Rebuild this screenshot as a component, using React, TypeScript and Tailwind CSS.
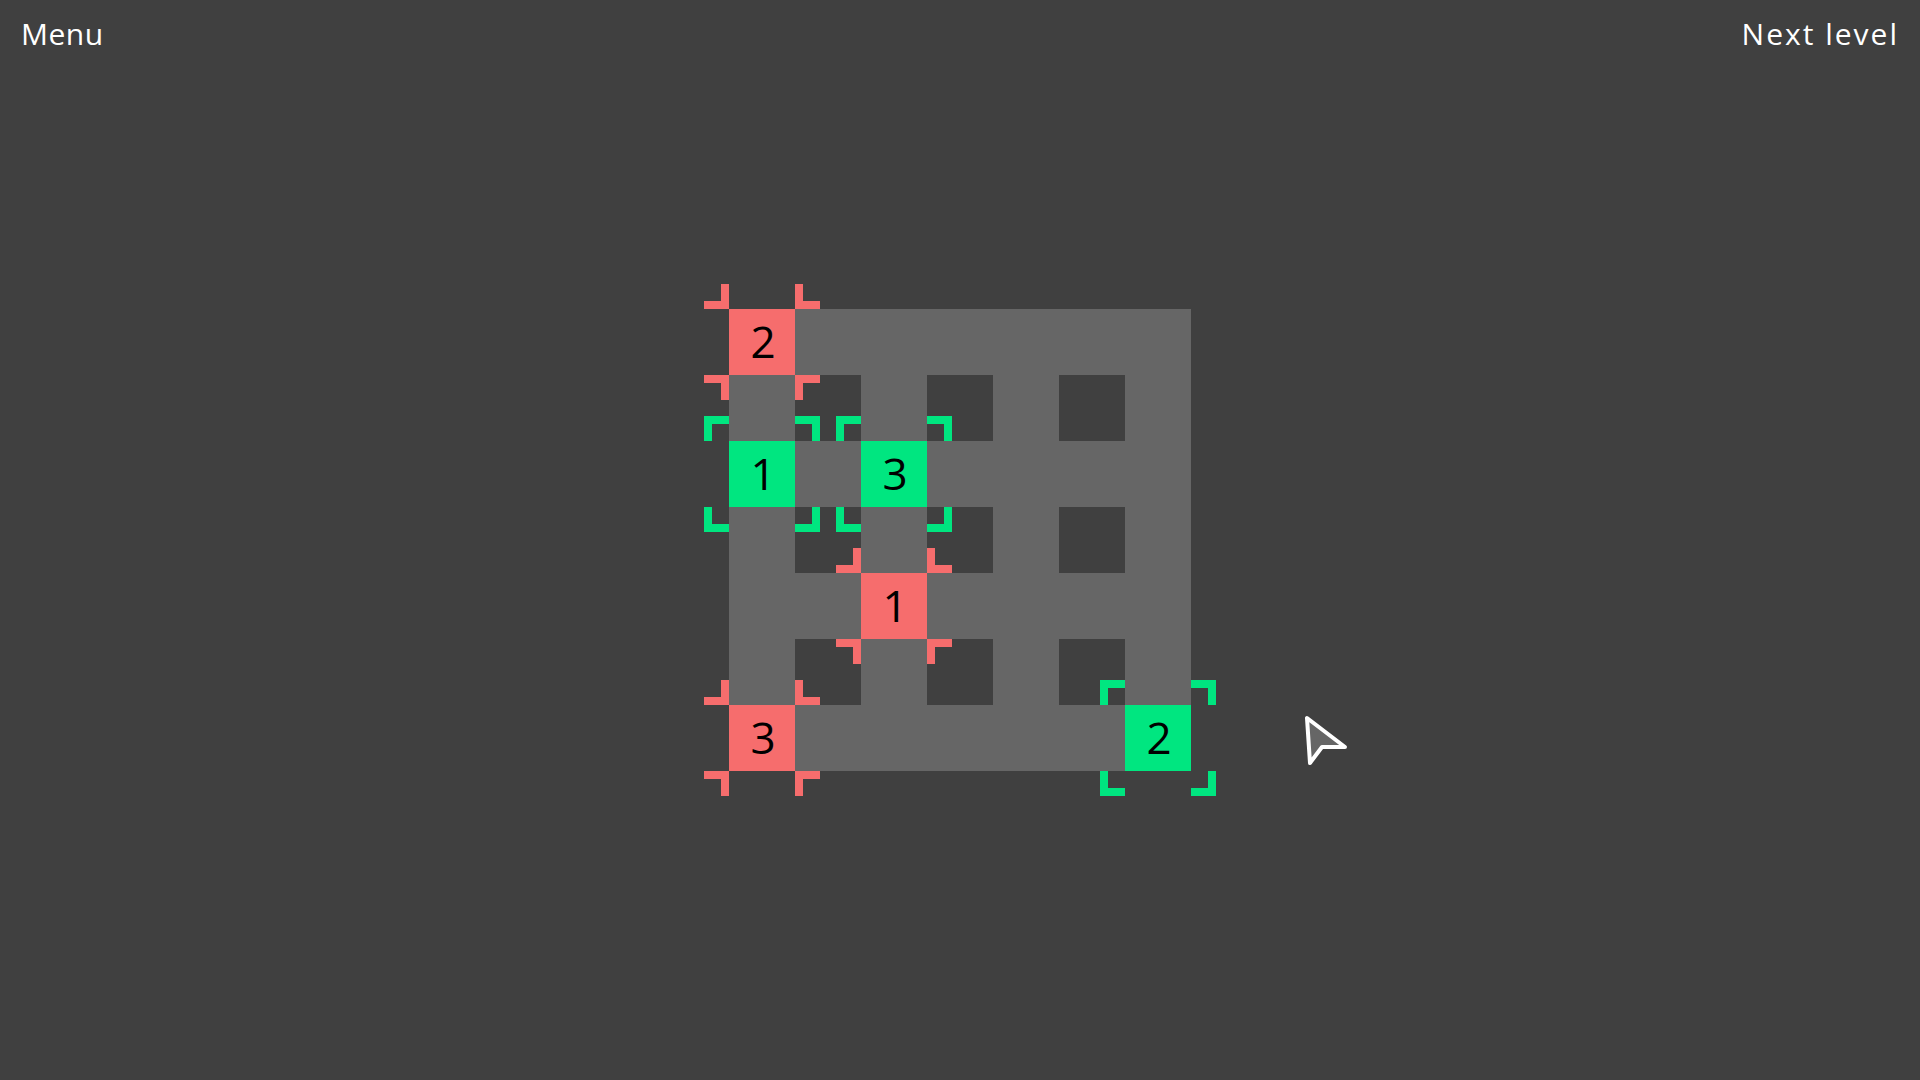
type Kind = "x" | "o" | "r" | "g";

// 7x7 board. "x" = path, "o" = empty, r/g = numbered tiles
const board: { k: Kind; n?: number }[][] = [
  [{ k: "r", n: 2 }, { k: "x" }, { k: "x" }, { k: "x" }, { k: "x" }, { k: "x" }, { k: "x" }],
  [{ k: "x" }, { k: "o" }, { k: "x" }, { k: "o" }, { k: "x" }, { k: "o" }, { k: "x" }],
  [{ k: "g", n: 1 }, { k: "x" }, { k: "g", n: 3 }, { k: "x" }, { k: "x" }, { k: "x" }, { k: "x" }],
  [{ k: "x" }, { k: "o" }, { k: "x" }, { k: "o" }, { k: "x" }, { k: "o" }, { k: "x" }],
  [{ k: "x" }, { k: "x" }, { k: "r", n: 1 }, { k: "x" }, { k: "x" }, { k: "x" }, { k: "x" }],
  [{ k: "x" }, { k: "o" }, { k: "x" }, { k: "o" }, { k: "x" }, { k: "o" }, { k: "x" }],
  [{ k: "r", n: 3 }, { k: "x" }, { k: "x" }, { k: "x" }, { k: "x" }, { k: "x" }, { k: "g", n: 2 }],
];

function Brackets({ green }: { green: boolean }) {
  const c = green ? "border-[#00e680]" : "border-[#f66d6d]";
  const base = "absolute w-[25px] h-[25px] " + c;
  if (green) {
    return (
      <>
        <div className={base + " -left-[25px] -top-[25px] border-t-8 border-l-8"} />
        <div className={base + " -right-[25px] -top-[25px] border-t-8 border-r-8"} />
        <div className={base + " -left-[25px] -bottom-[25px] border-b-8 border-l-8"} />
        <div className={base + " -right-[25px] -bottom-[25px] border-b-8 border-r-8"} />
      </>
    );
  }
  return (
    <>
      <div className={base + " -left-[25px] -top-[25px] border-b-8 border-r-8"} />
      <div className={base + " -right-[25px] -top-[25px] border-b-8 border-l-8"} />
      <div className={base + " -left-[25px] -bottom-[25px] border-t-8 border-r-8"} />
      <div className={base + " -right-[25px] -bottom-[25px] border-t-8 border-l-8"} />
    </>
  );
}

function Cell({ k, n }: { k: Kind; n?: number }) {
  if (k === "o") return <div className="w-[66px] h-[66px]" />;
  if (k === "x") return <div className="w-[66px] h-[66px] bg-[#666666]" />;
  const green = k === "g";
  return (
    <div
      className={
        "relative w-[66px] h-[66px] flex items-center justify-center text-black text-[44px] leading-none " +
        (green ? "bg-[#00e680]" : "bg-[#f66d6d]")
      }
    >
      <Brackets green={green} />
      <span className="relative -top-[1px] left-[1px]">{n}</span>
    </div>
  );
}

export default function App() {
  return (
    <div
      className="relative w-full h-screen bg-[#404040] flex flex-col text-white overflow-hidden"
      style={{ fontFamily: '"Open Sans", "Noto Sans", sans-serif' }}
    >
      <div className="h-[68px] flex items-center justify-between px-[21px] text-[30px] leading-none">
        <button className="cursor-pointer tracking-[0.5px]">Menu</button>
        <button className="cursor-pointer tracking-[2px]">Next level</button>
      </div>
      <div className="flex-1 flex items-center justify-center pb-[68px]">
        <div className="grid grid-cols-7">
          {board.flat().map((c, i) => (
            <Cell key={i} k={c.k} n={c.n} />
          ))}
        </div>
      </div>
      <svg
        className="absolute left-[1300px] top-[711px]"
        width="56"
        height="62"
        viewBox="0 0 56 62"
      >
        <path
          d="M7 7 L10 52 L22 36 L45 36 Z"
          fill="#666666"
          stroke="#ffffff"
          strokeWidth="4"
          strokeLinejoin="round"
        />
      </svg>
    </div>
  );
}
